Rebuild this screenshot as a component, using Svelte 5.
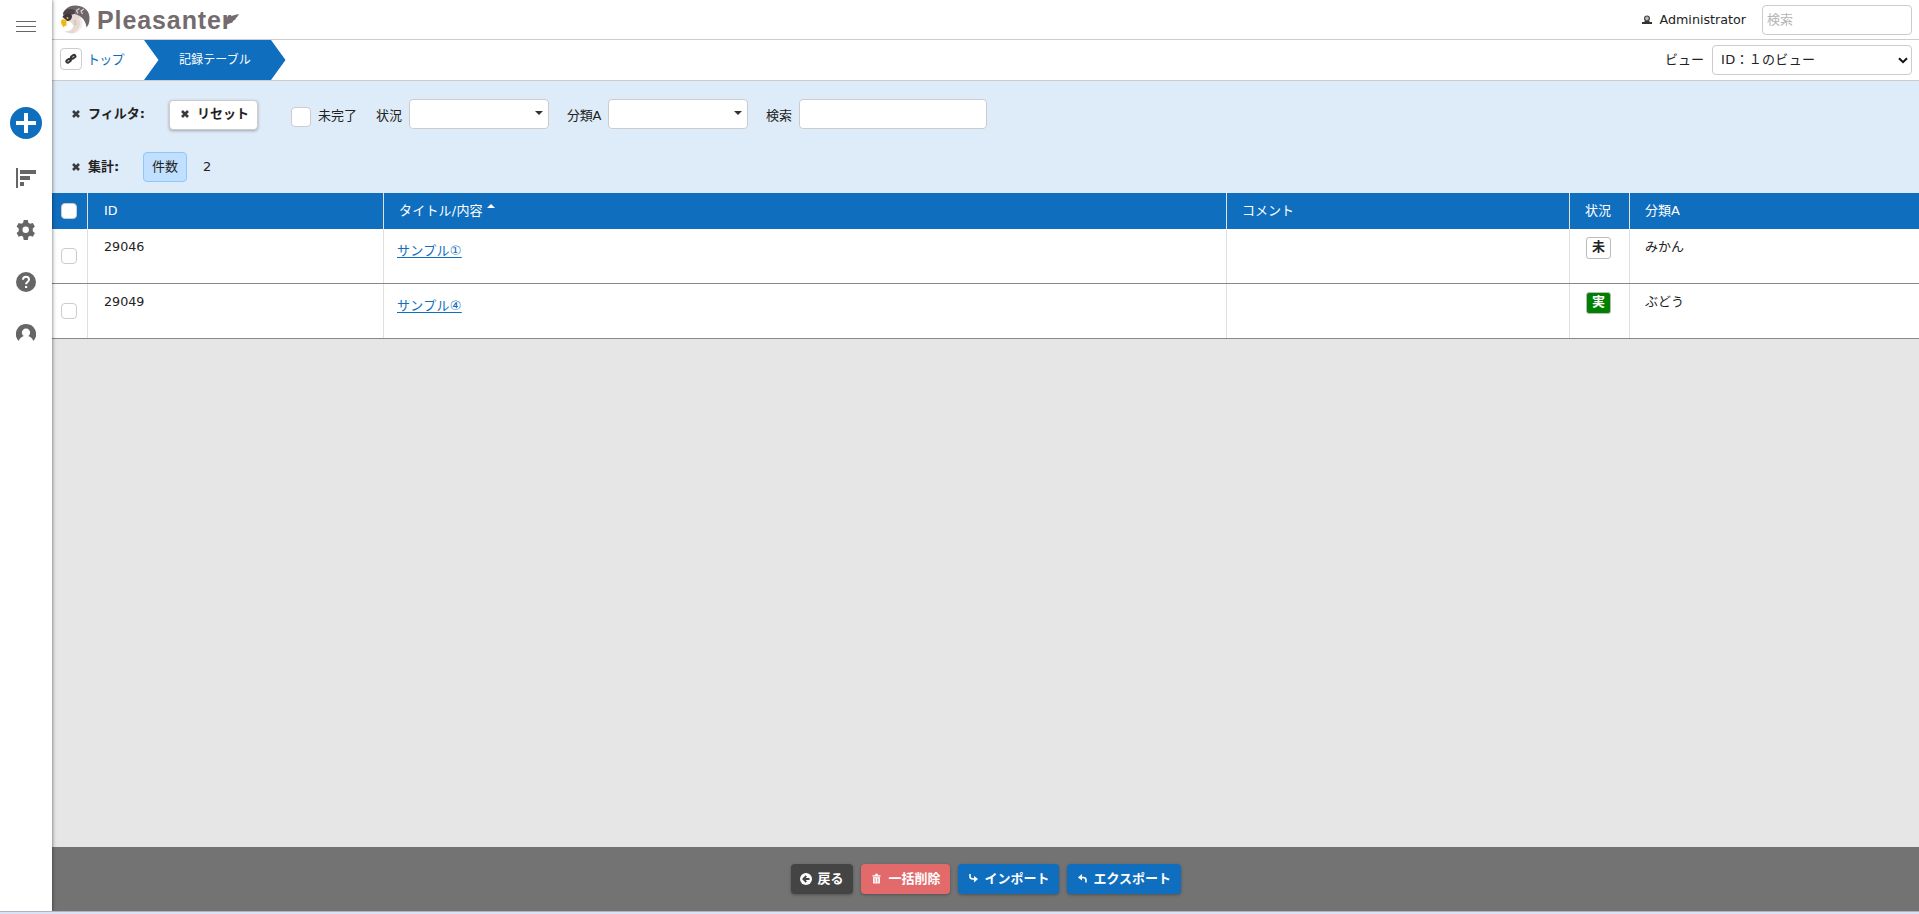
<script>
	let search = '';
	let keyword = '';

	const records = [
		{ id: 29046, title: 'サンプル①', comment: '', status: '未', done: false, classA: 'みかん' },
		{ id: 29049, title: 'サンプル④', comment: '', status: '実', done: true, classA: 'ぶどう' }
	];
</script>

<div class="app">
	<nav class="side">
		<button class="menu" aria-label="menu">
			<svg width="20" height="12" viewBox="0 0 20 12"><path d="M0 1.5h20M0 6.5h20M0 11.5h20" stroke="#666" stroke-width="1" /></svg>
		</button>
		<button class="add" aria-label="new">
			<svg width="32" height="32" viewBox="0 0 32 32"><circle cx="16" cy="16" r="16" fill="#106ebe" /><path d="M6 16h20M16 6v20" stroke="#fff" stroke-width="4" /></svg>
		</button>
		<button aria-label="view">
			<svg width="20" height="20" viewBox="0 0 20 20" fill="#666"><path d="M0 0h2v20H0zM4 2h16v4H4zM4 8h10v4H4zM4 14h4v4H4z" /></svg>
		</button>
		<button aria-label="manage">
			<svg width="20" height="20" viewBox="0 0 20 20"><path fill="#666" fill-rule="evenodd" d="M7.7 0h4.1l.6 2.8 1.7 1 2.7-.9 2.1 3.6-2.1 1.9v2.8l2.1 1.9-2.1 3.6-2.7-.9-1.7 1-.6 3.2H7.7l-.6-3.2-1.7-1-2.7.9-2.1-3.6 2.1-1.9V8.4L.6 6.5l2.1-3.6 2.7.9 1.7-1zM9.7 6.6a3.2 3.2 0 100 6.4 3.2 3.2 0 000-6.4z" /></svg>
		</button>
		<button aria-label="help">
			<svg width="20" height="20" viewBox="0 0 20 20"><circle cx="10" cy="10" r="10" fill="#666" /><path d="M7 7.8a3 3 0 116 0c0 1.9-2.9 2.1-2.9 4.5" fill="none" stroke="#fff" stroke-width="2" /><path d="M9 14h2.2v2H9z" fill="#fff" /></svg>
		</button>
		<button aria-label="user">
			<svg width="20" height="20" viewBox="0 0 20 20"><path fill="#666" fill-rule="evenodd" d="M10 0a10 10 0 00-7.2 17c.8-2.7 3-4.3 5-4.900a4.1 4.1 0 114.4 0c2.4.6 4.200 2.2 5 4.900A10 10 0 0010 0z" /></svg>
		</button>
	</nav>

	<div class="main">
		<header>
			<div class="logo">
				<svg width="30" height="30" viewBox="0 0 30 30">
					<path d="M8 9c6-3 12 1 12.500 7 .5 7-4 12.500-10 12.500-3 0-5-1-6.500-2.500 5 .5 9-2 8-6-1-3-5-3-6-7z" fill="#e6dad2" />
					<path d="M16 12c5 4 4 11-3 16 6-1 10-7 8-13z" fill="#f3ece6" />
					<path d="M2 10C3 4 8 0 15 .5c9 .5 14 6 13.500 13.500 0 4-1.500 7-3 8.500C25 16 21 11 14 9z" fill="#6f666b" />
					<path d="M2 9C3 4 7 4 9 4l5 1-1 4-4 1z" fill="#4d444a" />
					<path d="M1.500 12c1-4 9-5 9.500-1 0 3-2 5-5 5z" fill="#40373d" />
					<path d="M1.500 14l4 1.500V21c-2-1-2.500.5-2.500 1.500C0 20-1 16 1.500 14z" fill="#f0b80a" />
					<path d="M18.500 3.500l-3 2 1.500 3M23 4l-3 2 1.500 3" fill="none" stroke="#ddd4cf" stroke-width="1.2" />
					<circle cx="6.500" cy="13" r="1" fill="#f1ba18" />
					<path d="M13 17l2-1.500M13.500 19h2" stroke="#a69a94" stroke-width=".8" />
				</svg>
				<span>Pleasanter</span>
				<svg class="feather" width="15" height="16" viewBox="0 0 15 16"><path d="M1 12C1 5 6 1.500 15 0l-2.200 3.500-1.300.5.500 1-3 2-.500 1.500L4 10z" fill="#746b6e" /></svg>
			</div>
			<div class="account">
				<svg width="10" height="10" viewBox="0 0 10 10"><path d="M0 7h2l1-1h4l1 1h2v2H0z" fill="#333" /><circle cx="5" cy="3.400" r="2.400" fill="#bbb" stroke="#444" stroke-width="1.200" /></svg>
				<span class="user">Administrator</span>
				<input class="global-search" placeholder="検索" bind:value={search} />
			</div>
		</header>

		<div class="crumbs">
			<button class="link-button" aria-label="link">
				<svg width="12" height="12" viewBox="0 0 12 12"><g fill="none" stroke="#333" stroke-width="2"><rect x="1.4" y="6.5" width="4.5" height="2.7" rx="1.2" transform="rotate(-35 3.5 8)" /><rect x="6" y="2.4" width="4.5" height="2.7" rx="1.2" transform="rotate(-35 8.3 3.8)" /></g><path d="M4.5 7.2l3-2.5" stroke="#333" stroke-width="2" /></svg>
			</button>
			<a class="top" href="#top">トップ</a>
			<div class="current">
				<svg width="142" height="40" viewBox="0 0 142 40"><path d="M0 0h127l14.500 20L127 40H0l14.500-20z" fill="#106ebe" /></svg>
				<span>記録テーブル</span>
			</div>
			<div class="view">
				<span>ビュー</span>
				<div class="select">
					<span>ID：１のビュー</span>
					<svg width="10" height="7" viewBox="0 0 10 7"><path d="M1 1.200l4 4 4-4" fill="none" stroke="#111" stroke-width="2" /></svg>
				</div>
			</div>
		</div>

		<section class="conditions">
			<div class="filters">
				<div class="label">
					<svg width="8" height="8" viewBox="0 0 8 8"><path d="M1 1l6 6M7 1L1 7" stroke="#3a3a3a" stroke-width="2.600" /></svg>
					<span>フィルタ:</span>
				</div>
				<button class="reset">
					<svg width="8" height="8" viewBox="0 0 8 8"><path d="M1 1l6 6M7 1L1 7" stroke="#3a3a3a" stroke-width="2.600" /></svg>
					<span>リセット</span>
				</button>
				<span class="check"></span>
				<span class="t incomplete">未完了</span>
				<span class="t status-label">状況</span>
				<div class="combo"><i></i></div>
				<span class="t class-label">分類A</span>
				<div class="combo"><i></i></div>
				<span class="t keyword-label">検索</span>
				<input class="keyword" bind:value={keyword} />
			</div>
			<div class="totals">
				<div class="label">
					<svg width="8" height="8" viewBox="0 0 8 8"><path d="M1 1l6 6M7 1L1 7" stroke="#3a3a3a" stroke-width="2.600" /></svg>
					<span>集計:</span>
				</div>
				<span class="count">件数</span>
				<span class="num">{records.length}</span>
			</div>
		</section>

		<div class="grid head">
			<div class="cb"><span class="box"></span></div>
			<div><span class="id">ID</span></div>
			<div><span class="title-head">タイトル/内容</span><i class="asc"></i></div>
			<div>コメント</div>
			<div>状況</div>
			<div>分類A</div>
		</div>
		{#each records as record}
			<div class="grid row">
				<div class="cb"><span class="box"></span></div>
				<div><span class="id">{record.id}</span></div>
				<div class="title"><a href="#{record.id}">{record.title}</a></div>
				<div>{record.comment}</div>
				<div class="status"><span class:done={record.done}>{record.status}</span></div>
				<div>{record.classA}</div>
			</div>
		{/each}

		<footer>
			<button class="back">
				<svg width="12" height="12" viewBox="0 0 12 12"><circle cx="6" cy="6" r="6" fill="#fff" /><path d="M9.500 6H4M6.300 3L3.300 6l3 3" fill="none" stroke="#444" stroke-width="1.800" /></svg>
				<span>戻る</span>
			</button>
			<button class="delete">
				<svg width="9" height="11" viewBox="0 0 10 11"><path d="M0.500 2.500h9M3.500 1h3" stroke="#fff" stroke-width="1.500" /><path d="M1.200 4h7.600v7H1.200z" fill="#fff" /><path d="M3.500 5v5M6.500 5v5" stroke="#e26a6a" stroke-width=".8" /></svg>
				<span>一括削除</span>
			</button>
			<button class="import">
				<svg width="9" height="9" viewBox="0 0 9 9"><path d="M1 0v2.500Q1 5 4 5h2" fill="none" stroke="#fff" stroke-width="1.600" /><path d="M5 2l4 3-4 3.500z" fill="#fff" /></svg>
				<span>インポート</span>
			</button>
			<button class="export">
				<svg width="9" height="9" viewBox="0 0 9 9"><path d="M8 8.500V6Q8 3.500 5 3.500H3" fill="none" stroke="#fff" stroke-width="1.600" /><path d="M4 0L0 3.500 4 6.500z" fill="#fff" /></svg>
				<span>エクスポート</span>
			</button>
		</footer>
	</div>
</div>
<div class="edge"></div>

<style>
	:global(body) {
		margin: 0;
		background: #e6e6e6;
		overflow: hidden;
	}
	.app {
		display: flex;
		height: 911px;
		font: 13px/20px "DejaVu Sans", "Noto Sans CJK JP", sans-serif;
		color: #222;
	}
	* {
		box-sizing: border-box;
	}
	button, input {
		font: inherit;
		color: inherit;
	}
	svg {
		display: block;
		flex-shrink: 0;
	}
	span, a {
		white-space: nowrap;
	}
	.side {
		width: 52px;
		background: #fff;
		box-shadow: 0 0 4px rgba(0, 0, 0, 0.6);
		display: flex;
		flex-direction: column;
		align-items: center;
		gap: 32px;
		padding-top: 20px;
		z-index: 1;
		clip-path: inset(0 -6px 0 0);
	}
	.side button {
		padding: 0;
		border: 0;
		background: none;
	}
	.side .menu {
		margin-bottom: 43px;
	}
	.side .add {
		margin-bottom: -3px;
	}
	.main {
		flex: 1;
		min-width: 0;
		display: flex;
		flex-direction: column;
		background: #e6e6e6;
	}
	header {
		height: 40px;
		background: #fff;
		border-bottom: 1px solid #ccc;
		display: flex;
		justify-content: space-between;
	}
	.logo {
		display: flex;
		padding: 5px 0 0 9px;
	}
	.logo span {
		font: bold 25px/31px "Liberation Sans", sans-serif;
		color: #746b6e;
		letter-spacing: 0.9px;
		margin-left: 6px;
	}
	.feather {
		margin: 9px 0 0 -8px;
	}
	.account {
		display: flex;
		align-items: center;
		padding-right: 7px;
	}
	.user {
		font-size: 12.700px;
		margin: 0 16px 0 8px;
	}
	input {
		border: 1px solid #ccc;
		border-radius: 4px;
		background: #fff;
		height: 30px;
		padding: 0 4px;
	}
	input::placeholder {
		color: #b5b5b5;
	}
	.global-search {
		width: 150px;
	}
	.crumbs {
		height: 41px;
		background: #fff;
		border-bottom: 1px solid #ccc;
		display: flex;
		padding: 0 7px 0 8px;
	}
	.link-button {
		width: 22px;
		height: 22px;
		margin: 8px 5px 0 0;
		padding: 4px;
		background: #fff;
		border: 1px solid #ccc;
		border-radius: 4px;
	}
	.top {
		width: 57px;
		line-height: 39px;
		color: #106ebe;
		text-decoration: none;
		letter-spacing: -0.8px;
	}
	.current {
		display: grid;
		color: #fff;
		line-height: 40px;
		font-size: 12px;
	}
	.current > * {
		grid-area: 1 / 1;
	}
	.current span {
		padding-left: 35px;
		letter-spacing: 0.1px;
	}
	.view {
		margin-left: auto;
		display: flex;
		align-items: center;
		gap: 8px;
	}
	.select {
		width: 200px;
		height: 30px;
		border: 1px solid #ccc;
		border-radius: 4px;
		display: flex;
		align-items: center;
		justify-content: space-between;
		padding: 0 3px 0 8px;
		letter-spacing: 0.3px;
	}
	.conditions {
		height: 112px;
		background: #deebf8;
		padding: 18px 0 0 20px;
	}
	.filters, .totals {
		display: flex;
		align-items: flex-start;
		height: 52px;
	}
	.label {
		display: flex;
		align-items: center;
		gap: 8px;
		height: 30px;
		width: 97px;
		font-weight: bold;
	}
	.reset {
		display: flex;
		align-items: center;
		width: 89px;
		height: 30px;
		margin: 1px 33px 0 0;
		padding: 0 10px 2px 11px;
		gap: 8px;
		background: #fff;
		border: 1px solid #ccc;
		border-radius: 4px;
		box-shadow: 0 1px 3px rgba(0, 0, 0, 0.3);
		font-weight: bold;
	}
	.check {
		width: 20px;
		height: 20px;
		margin: 8px 7px 0 0;
		background: #fff;
		border: 1px solid #ccc;
		border-radius: 4px;
	}
	.t {
		padding-top: 7px;
	}
	.incomplete {
		width: 58px;
	}
	.status-label {
		width: 33px;
	}
	.class-label {
		width: 41px;
		margin-left: 18px;
		letter-spacing: -0.200px;
	}
	.keyword-label {
		width: 33px;
		margin-left: 18px;
	}
	.combo {
		width: 140px;
		height: 30px;
		background: #fff;
		border: 1px solid #ccc;
		border-radius: 4px;
		display: flex;
		justify-content: flex-end;
		padding: 11px 5px 0 0;
	}
	.combo i {
		height: 0;
		border: 4px solid transparent;
		border-top-color: #333;
		border-bottom: 0;
	}
	.keyword {
		width: 188px;
	}
	.totals .label {
		width: 71px;
		padding-top: 1px;
	}
	.count {
		width: 44px;
		height: 30px;
		margin: 1px 16px 0 0;
		line-height: 27px;
		text-align: center;
		background: #c1e0ff;
		border: 1px solid #8ec8fb;
		border-radius: 4px;
	}
	.num {
		line-height: 32px;
	}
	.grid {
		display: grid;
		grid-template-columns: 36px 296px 843px 343px 60px 1fr;
	}
	.grid > div {
		border-right: 1px solid #e0e0e0;
		padding: 8px 0 0 15px;
	}
	.grid > div:last-child {
		border-right: 0;
	}
	.head {
		height: 36px;
		background: #106ebe;
		color: #fff;
	}
	.id {
		font-size: 12.700px;
		padding-left: 1px;
	}
	.title-head {
		letter-spacing: 0.2px;
	}
	.asc {
		display: inline-block;
		margin-left: 4px;
		vertical-align: 7px;
		border: 4px solid transparent;
		border-bottom-color: #fff;
		border-top: 0;
	}
	.row {
		height: 55px;
		background: #fff;
		border-bottom: 1px solid #888;
	}
	.grid > .cb {
		padding: 10px 0 0 9px;
	}
	.row > .cb {
		padding-top: 19px;
	}
	.box {
		display: block;
		width: 16px;
		height: 16px;
		background: #fff;
		border: 1px solid #ccc;
		border-radius: 4px;
	}
	.row .title {
		padding: 12px 0 0 13px;
	}
	.title a {
		color: #106ebe;
		text-underline-offset: 2px;
		letter-spacing: 0.3px;
	}
	.row .status {
		padding: 8px 0 0 16px;
	}
	.status span {
		display: block;
		width: 25px;
		height: 22px;
		line-height: 18px;
		text-align: center;
		font-weight: bold;
		border: 1px solid #bbb;
		border-radius: 3px;
	}
	.status .done {
		background: #008000;
		color: #fff;
	}
	footer {
		margin-top: auto;
		height: 64px;
		background: #737373;
		display: flex;
		justify-content: center;
		gap: 8px;
		padding-top: 17px;
	}
	footer button {
		display: flex;
		align-items: center;
		height: 30px;
		border: 0;
		border-radius: 4px;
		box-shadow: 0 1px 3px rgba(0, 0, 0, 0.3);
		color: #fff;
		font-weight: bold;
		padding: 0 0 1px;
	}
	.back {
		width: 62px;
		background: #444;
		padding-left: 9px;
		gap: 6px;
	}
	.delete {
		width: 89px;
		background: #e26a6a;
		padding-left: 11px;
		gap: 8px;
	}
	.import {
		width: 101px;
		background: #106ebe;
		padding-left: 11px;
		gap: 7px;
	}
	.export {
		width: 114px;
		background: #106ebe;
		padding-left: 11px;
		gap: 7px;
	}
	.edge {
		height: 3px;
		background: #d9e3f5;
		border-top: 1px solid #b0b5bd;
		box-sizing: border-box;
	}
</style>
